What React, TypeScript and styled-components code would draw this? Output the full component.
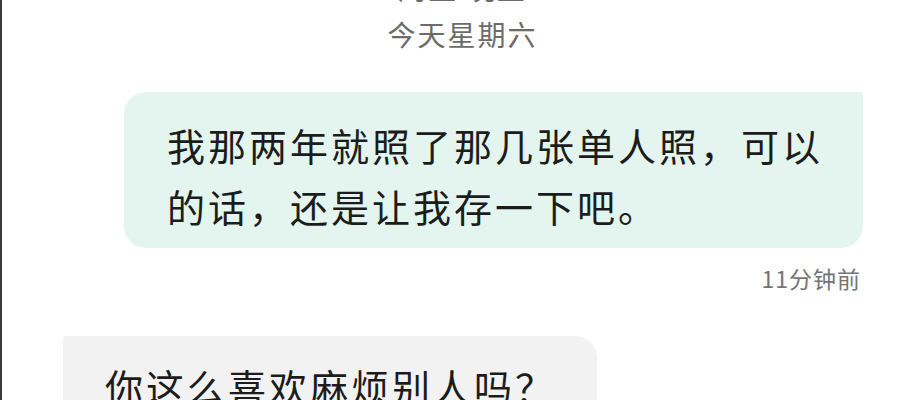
import React from "react";
import styled, { createGlobalStyle } from "styled-components";

const Global = createGlobalStyle`
  html, body { margin: 0; padding: 0; background: #ffffff; }
  body { font-family: "Noto Sans CJK SC", "Noto Sans", sans-serif; }
`;

const Screen = styled.div`
  width: 923px;
  height: 400px;
  box-sizing: border-box;
  border-left: 2px solid #3a3a3a;
  background: #ffffff;
  overflow: hidden;
  display: flex;
  flex-direction: column;
`;

const DateLabel = styled.div<{ $cut?: boolean }>`
  align-self: center;
  font-size: 28px;
  line-height: 40px;
  letter-spacing: 2px;
  color: #6b6b6b;
  margin-top: ${(p) => (p.$cut ? "-32px" : "6px")};
`;

const Row = styled.div<{ $side: "left" | "right" }>`
  display: flex;
  justify-content: ${(p) => (p.$side === "right" ? "flex-end" : "flex-start")};
  padding: ${(p) => (p.$side === "right" ? "0 60px 0 0" : "0 0 0 61px")};
  margin-top: ${(p) => (p.$side === "right" ? "38px" : "43px")};
`;

const Bubble = styled.div<{ $side: "left" | "right" }>`
  box-sizing: border-box;
  width: ${(p) => (p.$side === "right" ? "739px" : "534px")};
  background: ${(p) => (p.$side === "right" ? "#e3f5ee" : "#f2f2f2")};
  border-radius: ${(p) => (p.$side === "right" ? "22px 4px 22px 22px" : "4px 22px 22px 22px")};
  padding: ${(p) => (p.$side === "right" ? "22px 30px 12px 43px" : "19px 30px 20px 42px")};
  font-size: 38px;
  line-height: 61px;
  letter-spacing: 3px;
  color: #1c1c1c;
`;

const Time = styled.div`
  align-self: flex-end;
  margin-right: 62px;
  font-size: 23px;
  line-height: 30px;
  letter-spacing: 1px;
  color: #747474;
  margin-top: 15px;
`;

export default function App() {
  return (
    <>
      <Global />
      <Screen>
        <DateLabel $cut>周五 晚上</DateLabel>
        <DateLabel>今天星期六</DateLabel>
        <Row $side="right">
          <Bubble $side="right">
            我那两年就照了那几张单人照，可以的话，还是让我存一下吧。
          </Bubble>
        </Row>
        <Time>11分钟前</Time>
        <Row $side="left">
          <Bubble $side="left">你这么喜欢麻烦别人吗？</Bubble>
        </Row>
      </Screen>
    </>
  );
}
